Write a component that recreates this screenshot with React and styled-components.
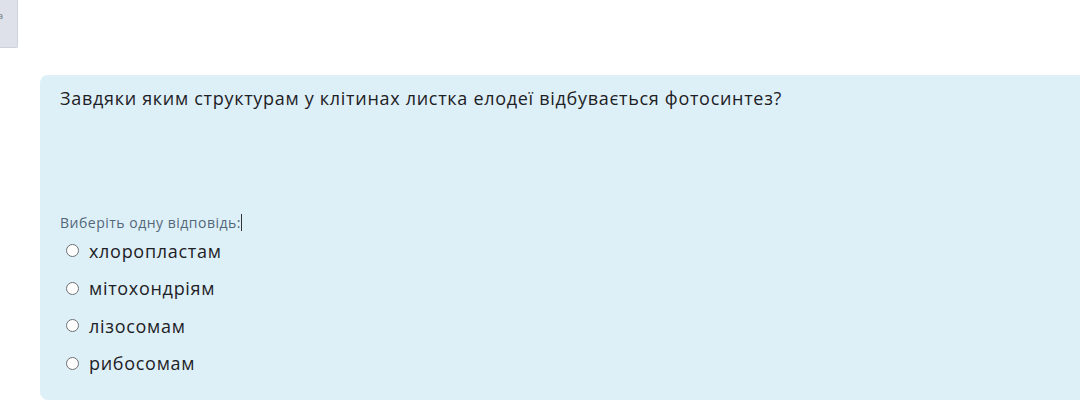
import React from "react";
import styled, { createGlobalStyle } from "styled-components";

const Global = createGlobalStyle`
  html, body { margin: 0; padding: 0; background: #fff; overflow: hidden; }
  body { font-family: "Open Sans", "Noto Sans", sans-serif; color: #1d2125; }
`;

const Page = styled.div`
  width: 1080px;
  height: 413px;
  position: relative;
  overflow: hidden;
`;

const TopBar = styled.div`
  display: flex;
  height: 75px;
`;

const SideButton = styled.div`
  width: 18px;
  height: 48px;
  box-sizing: border-box;
  padding-top: 10px;
  background: #dee1e9;
  border-right: 1px solid #cdd1db;
  border-bottom: 1px solid #cdd1db;
  border-bottom-right-radius: 2px;
  overflow: hidden;
  display: flex;
  align-items: flex-start;
  justify-content: flex-end;
`;

const SideLabel = styled.span`
  font-size: 9px;
  line-height: 12px;
  color: #6a7380;
  margin-right: 14px;
  white-space: nowrap;
`;

const Panel = styled.div`
  margin-left: 40px;
  width: 1060px;
  height: 325px;
  box-sizing: border-box;
  background: #def0f7;
  border-radius: 8px 0 0 8px;
  padding: 11px 20px 18px 20px;
  display: flex;
  flex-direction: column;
`;

const Question = styled.p`
  margin: 0;
  font-size: 18px;
  line-height: 24px;
  letter-spacing: 0.7px;
  min-height: 127px;
  color: #1d2125;
`;

const Prompt = styled.div`
  font-size: 14px;
  line-height: 19px;
  letter-spacing: 0.5px;
  color: #52677a;
  display: flex;
  align-items: center;
`;

const Caret = styled.span`
  width: 1px;
  height: 17px;
  background: #333;
`;

const Answers = styled.div`
  display: flex;
  flex-direction: column;
`;

const Row = styled.label`
  display: flex;
  align-items: center;
  height: 37.5px;
  padding-left: 6px;
  font-size: 18px;
  letter-spacing: 0.7px;
  color: #1d2125;
`;

const Radio = styled.span`
  width: 11px;
  height: 11px;
  border: 1px solid #6d6f72;
  border-radius: 50%;
  background: #fff;
  margin-right: 10px;
  flex-shrink: 0;
`;

const options = ["хлоропластам", "мітохондріям", "лізосомам", "рибосомам"];

export default function App() {
  return (
    <Page>
      <Global />
      <TopBar>
        <SideButton>
          <SideLabel>а</SideLabel>
        </SideButton>
      </TopBar>
      <Panel>
        <Question>
          Завдяки яким структурам у клітинах листка елодеї відбувається фотосинтез?
        </Question>
        <Prompt>
          Виберіть одну відповідь:
          <Caret />
        </Prompt>
        <Answers>
          {options.map((o) => (
            <Row key={o}>
              <Radio />
              {o}
            </Row>
          ))}
        </Answers>
      </Panel>
    </Page>
  );
}
